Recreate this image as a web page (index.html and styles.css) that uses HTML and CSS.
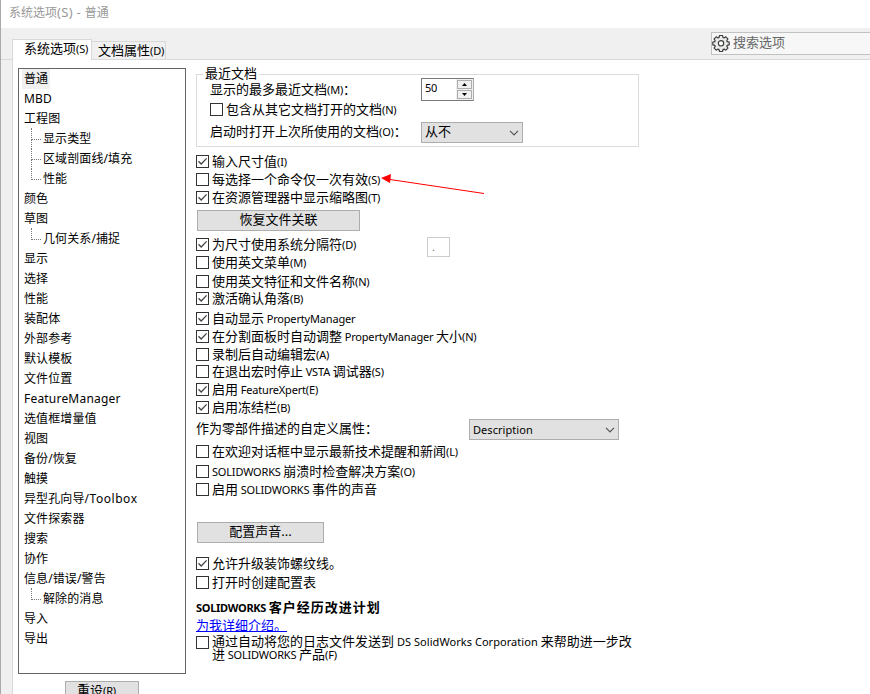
FILE: index.html
```html
<!DOCTYPE html>
<html lang="zh-CN">
<head>
<meta charset="utf-8">
<title>系统选项(S) - 普通</title>
<link rel="stylesheet" href="styles.css">
</head>
<body>
<svg width="0" height="0" class="defs">
  <symbol id="tick" viewBox="0 0 11 11"><path d="M1.5 5.2 4.2 8 9.6 2.4" fill="none" stroke="#444" stroke-width="1.3"/></symbol>
  <symbol id="chev" viewBox="0 0 10 6"><path d="M1 .8 5 4.8 9 .8" fill="none" stroke="#555" stroke-width="1.2"/></symbol>
</svg>
<div class="window">
  <header class="title">系统选项<span class="t">(S) - </span>普通</header>
  <div class="bar">
    <nav class="tabs">
      <div class="tab active">系统选项<span class="l">(S)</span></div>
      <div class="tab">文档属性<span class="l">(D)</span></div>
    </nav>
    <div class="search">
      <svg width="18" height="18" viewBox="0 0 18 18"><path d="M7.5 1.5h3l.5 2 1 .4 1.8-1.1 2.1 2.1-1.1 1.8.4 1 2 .5v2.6l-2 .5-.4 1 1.1 1.8-2.1 2.1-1.8-1.1-1 .4-.5 2h-3l-.5-2-1-.4-1.8 1.1-2.1-2.1 1.1-1.8-.4-1-2-.5V8.200l2-.5.4-1L2.100 4.900l2.100-2.100L6 3.900l1-.4z" fill="#e9ece9" stroke="#3c3c3c" stroke-width="1.200" stroke-linejoin="round"/><circle cx="9" cy="9.300" r="2.700" fill="#fff" stroke="#3c3c3c" stroke-width="1.200"/></svg>
      <span>搜索选项</span>
    </div>
  </div>
  <main class="page">
    <aside class="side">
      <ul class="tree">
        <li><span class="sel">普通</span></li>
        <li class="latin">MBD</li>
        <li>工程图</li>
        <li class="sub more">显示类型</li>
        <li class="sub more">区域剖面线/填充</li>
        <li class="sub">性能</li>
        <li>颜色</li>
        <li>草图</li>
        <li class="sub">几何关系/捕捉</li>
        <li>显示</li>
        <li>选择</li>
        <li>性能</li>
        <li>装配体</li>
        <li>外部参考</li>
        <li>默认模板</li>
        <li>文件位置</li>
        <li class="latin">FeatureManager</li>
        <li>选值框增量值</li>
        <li>视图</li>
        <li>备份/恢复</li>
        <li>触摸</li>
        <li>异型孔向导<span class="toolbox">/Toolbox</span></li>
        <li>文件探索器</li>
        <li>搜索</li>
        <li>协作</li>
        <li>信息/错误/警告</li>
        <li class="sub">解除的消息</li>
        <li>导入</li>
        <li>导出</li>
      </ul>
      <div class="btn reset"><span>重设<span class="l">(R)</span></span></div>
    </aside>
    <section class="options">
      <div class="group">
        <span class="legend">最近文档</span>
        <div class="row r1"><span class="cap">显示的最多最近文档<span class="l">(M)</span>：</span>
          <div class="spin"><span class="l">50</span><div class="arrows"><i><svg width="5" height="3"><path d="M0 3 2.500 0 5 3z"/></svg></i><i><svg width="5" height="3"><path d="M0 0h5L2.500 3z"/></svg></i></div></div></div>
        <div class="row r2 check"><b class="box"></b><span>包含从其它文档打开的文档<span class="l">(N)</span></span></div>
        <div class="row r3"><span class="cap">启动时打开上次所使用的文档<span class="l">(O)</span>：</span>
          <div class="select small"><span>从不</span><svg width="10" height="6"><use href="#chev"/></svg></div></div>
      </div>
      <div class="list">
        <div class="check"><b class="box"><svg><use href="#tick"/></svg></b><span>输入尺寸值<span class="l">(I)</span></span></div>
        <div class="check"><b class="box"></b><span>每选择一个命令仅一次有效<span class="l">(S)</span></span></div>
        <div class="check"><b class="box"><svg><use href="#tick"/></svg></b><span>在资源管理器中显示缩略图<span class="l">(T)</span></span></div>
        <div class="btn restore">恢复文件关联</div>
        <div class="check"><b class="box"><svg><use href="#tick"/></svg></b><span class="sepcap">为尺寸使用系统分隔符<span class="l">(D)</span></span><span class="sep l">.</span></div>
        <div class="check"><b class="box"></b><span>使用英文菜单<span class="l">(M)</span></span></div>
        <div class="check"><b class="box"></b><span>使用英文特征和文件名称<span class="l">(N)</span></span></div>
        <div class="check"><b class="box"><svg><use href="#tick"/></svg></b><span>激活确认角落<span class="l">(B)</span></span></div>
        <div class="check"><b class="box"><svg><use href="#tick"/></svg></b><span>自动显示<span class="l"> PropertyManager</span></span></div>
        <div class="check"><b class="box"><svg><use href="#tick"/></svg></b><span>在分割面板时自动调整<span class="l"> PropertyManager </span>大小<span class="l">(N)</span></span></div>
        <div class="check"><b class="box"></b><span>录制后自动编辑宏<span class="l">(A)</span></span></div>
        <div class="check"><b class="box"></b><span>在退出宏时停止<span class="l"> VSTA </span>调试器<span class="l">(S)</span></span></div>
        <div class="check"><b class="box"><svg><use href="#tick"/></svg></b><span>启用<span class="l"> FeatureXpert(E)</span></span></div>
        <div class="check"><b class="box"><svg><use href="#tick"/></svg></b><span>启用冻结栏<span class="l">(B)</span></span></div>
        <div class="prop"><span class="propcap">作为零部件描述的自定义属性：</span><div class="select wide"><span class="l desc">Description</span><svg width="10" height="6"><use href="#chev"/></svg></div></div>
        <div class="check"><b class="box"></b><span>在欢迎对话框中显示最新技术提醒和新闻<span class="l">(L)</span></span></div>
        <div class="check"><b class="box"></b><span><span class="l">SOLIDWORKS </span>崩溃时检查解决方案<span class="l">(O)</span></span></div>
        <div class="check"><b class="box"></b><span>启用<span class="l"> SOLIDWORKS </span>事件的声音</span></div>
        <div class="btn sound">配置声音...</div>
        <div class="check"><b class="box"><svg><use href="#tick"/></svg></b><span>允许升级装饰螺纹线。</span></div>
        <div class="check"><b class="box"></b><span>打开时创建配置表</span></div>
        <div class="heading"><span class="l">SOLIDWORKS </span>客户经历改进计划</div>
        <div class="more-info"><a>为我详细介绍。</a></div>
        <div class="check"><b class="box"></b><span class="consent">通过自动将您的日志文件发送到<span class="l co"> DS SolidWorks Corporation </span>来帮助进一步改<br>进<span class="l"> SOLIDWORKS </span>产品<span class="l">(F)</span></span></div>
      </div>
    </section>
  </main>
  <svg class="arrow" width="106" height="22" viewBox="0 0 106 22"><path d="M10 4.500 104 18.500" stroke="#f00" fill="none"/><path d="M1 3 11 -1 10 8z" fill="#f00"/></svg>
  <i class="mark m1"></i><i class="mark m2"></i>
</div>
</body>
</html>
```
FILE: styles.css
```css
* { box-sizing: border-box; }
body {
  margin: 0;
  overflow: hidden;
  font: 13px/13px "Noto Sans", "Noto Sans CJK SC", sans-serif;
  color: #000;
  white-space: nowrap;
}
.defs { position: absolute; }
.window {
  position: relative;
  width: 870px;
  height: 694px;
  overflow: hidden;
  background: #f0f0f0;
  border-left: 1px solid #aaa;
  display: flex;
  flex-direction: column;
}
.l { font-size: 11px; letter-spacing: -.18px; white-space: pre; }
.co { letter-spacing: .05px; }
.desc { letter-spacing: .05px; }
.title {
  height: 28px;
  flex: none;
  background: #fff;
  padding-left: 8px;
  font-size: 12px;
  line-height: 25px;
  color: #999;
}
.t { font-size: 13px; white-space: pre; letter-spacing: .3px; }
.bar {
  height: 32px;
  flex: none;
  display: flex;
  justify-content: space-between;
  align-items: flex-start;
  box-shadow: inset 0 -1px #d9d9d9;
}
.tabs { display: flex; align-items: flex-end; height: 32px; padding-left: 11px; flex: 1; border-bottom: 1px solid #d9d9d9; }
.tab {
  width: 74px;
  height: 18px;
  padding-left: 6px;
  border: 1px solid #d9d9d9;
  border-left: 0;
  border-bottom: 0;
  line-height: 16px;
}
.tab.active {
  width: 80px;
  height: 21px;
  margin-bottom: -1px;
  padding-left: 11px;
  border-left: 1px solid #d9d9d9;
  background: #fff;
  line-height: 16px;
}
.search {
  width: 159px;
  height: 23px;
  margin-top: 4px;
  border: 1px solid #c2c2c2;
  border-right: 0;
  background: #f7f7f7;
  display: flex;
  align-items: center;
  gap: 3px;
  padding: 0 0 2px;
  color: #666;
}
.page {
  flex: 1;
  margin-left: 11px;
  border-left: 1px solid #d9d9d9;
  background: #fff;
  display: flex;
}
.side { width: 183px; padding: 8px 10px 0 5px; flex: none; }
.tree {
  list-style: none;
  width: 168px;
  height: 606px;
  margin: 0;
  padding: 0 0 0 5px;
  border: 1px solid #646464;
  font-size: 12px;
  line-height: 19px;
}
.tree li { height: 20px; position: relative; letter-spacing: .1px; }
.tree .latin { letter-spacing: .2px; }
.toolbox { letter-spacing: .55px; }
.sel { display: inline-block; height: 20px; width: 28px; margin-left: -2px; padding-left: 2px; background: #f0f0f0; }
.tree .sub { padding-left: 19px; }
.sub::before {
  content: "";
  position: absolute;
  left: 7px;
  top: -1px;
  width: 9px;
  height: 11px;
  border-left: 1px dotted #777;
  border-bottom: 1px dotted #777;
}
.more::after { content: ""; position: absolute; left: 7px; top: 10px; height: 10px; border-left: 1px dotted #777; }
.btn {
  height: 21px;
  border: 1px solid #adadad;
  background: #e1e1e1;
  text-align: center;
  line-height: 17px;
}
.reset { width: 74px; height: 24px; margin: 7px 0 0 47px; padding-right: 11px; }
.options { width: 443px; padding-top: 14px; }
.group { position: relative; height: 73px; border: 1px solid #dcdcdc; padding: 3px 0 0 13px; }
.legend { position: absolute; left: 6px; top: -9px; padding: 0 2px; background: #fff; line-height: 14px; }
.row { display: flex; }
.cap { width: 211px; }
.r1 { height: 25px; }
.r1 .cap { padding-top: 5px; }
.r2 { height: 19px; }
.r3 .cap { padding-top: 3px; }
.spin {
  width: 53px;
  height: 23px;
  border: 1px solid #7a7a7a;
  border-right-color: #ababab;
  display: flex;
  justify-content: space-between;
  padding-left: 3px;
  line-height: 18px;
}
.arrows { width: 17px; background: #f0f0f0; padding: 1px; display: flex; flex-direction: column; gap: 1px; }
.arrows i { flex: 1; border: 1px solid #adadad; display: flex; align-items: center; justify-content: center; }
.select {
  height: 21px;
  border: 1px solid #adadad;
  background: #e1e1e1;
  display: flex;
  align-items: center;
  justify-content: space-between;
  padding: 0 3px;
}
.small { width: 102px; }
.small span { margin-top: -2px; }
.wide { width: 150px; }
.check { display: flex; gap: 3px; }
.box { width: 13px; height: 13px; flex: none; border: 1px solid #333; background: #fff; }
.box svg { display: block; width: 11px; height: 11px; }
.list {
  display: grid;
  margin-top: 8px;
  grid-template-rows: 18px 18px 19px 28px 18px 19px 17px 20px 18px 18px 17px 18px 18px 18px 26px 20px 18px 39px 35px 19px 24px 17px 19px 30px;
}
.restore { width: 163px; margin-left: 1px; }
.sound { width: 127px; margin-left: 1px; }
.sepcap { width: 212px; }
.sep { width: 23px; height: 20px; margin-top: -1px; border: 1px solid #ccc; color: #777; padding: 2px 0 0 4px; }
.prop { display: flex; }
.propcap { width: 273px; padding-top: 3px; }
.heading { font-weight: 700; letter-spacing: 1px; padding-top: 1px; }
.heading .l { font-size: 11px; letter-spacing: -.28px; }
.more-info { padding-top: 2px; }
.more-info a { color: #00f; text-decoration: underline; text-underline-offset: 1px; }
.consent { margin-top: -1px; }
.arrow { position: absolute; left: 379px; top: 175px; overflow: visible; }
.mark { position: absolute; left: -1px; width: 1px; height: 8px; background: #222; }
.m1 { top: 142px; }
.m2 { top: 163px; }
```
